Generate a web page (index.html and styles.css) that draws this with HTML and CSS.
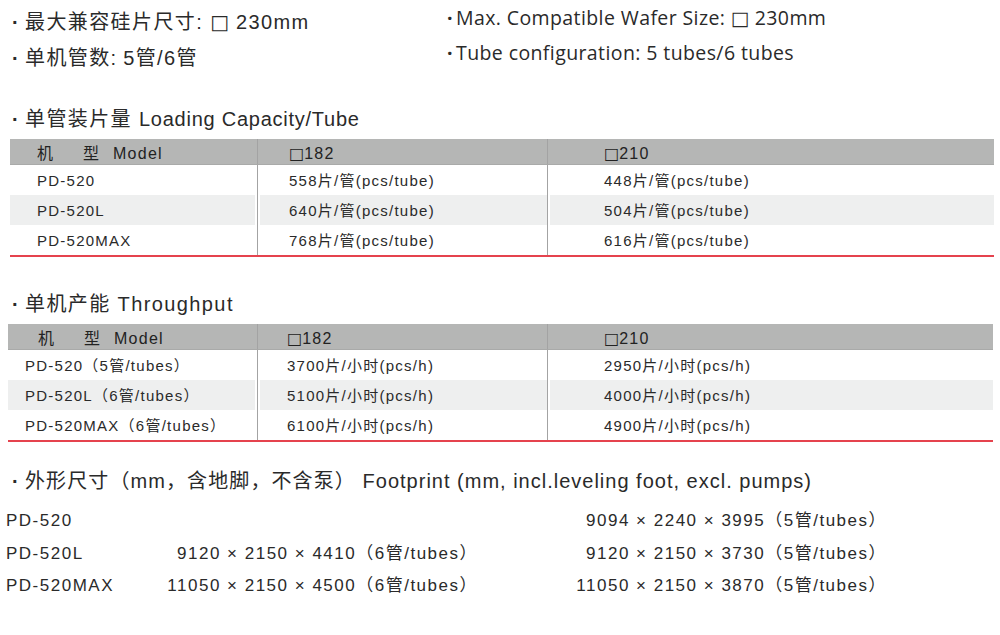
FILE: index.html
```html
<!DOCTYPE html>
<html lang="zh-CN">
<head>
<meta charset="utf-8">
<title>PD-520 规格</title>
<link rel="stylesheet" href="styles.css">
</head>
<body>
<div class="top">
  <ul class="spec spec-cn">
    <li><span class="dot">·</span>最大兼容硅片尺寸: <span class="sq">□</span> 230mm</li>
    <li><span class="dot">·</span>单机管数:<span class="tight"> </span>5管/6管</li>
  </ul>
  <ul class="spec spec-en">
    <li><span class="dot">·</span>Max. Compatible Wafer Size: <span class="sq">□</span> 230mm</li>
    <li><span class="dot">·</span>Tube configuration: 5 tubes/6 tubes</li>
  </ul>
</div>

<h2 class="heading h-load"><span class="dot">·</span>单管装片量 <span class="en">Loading Capacity/Tube</span></h2>
<div class="table t-load">
  <div class="cell head c1"><span class="k1">机</span><span class="k2">型</span>Model</div>
  <div class="cell head c2"><span class="sq">□</span>182</div>
  <div class="cell head c3"><span class="sq">□</span>210</div>

  <div class="cell c1">PD-520</div>
  <div class="cell c2">558片/管(pcs/tube)</div>
  <div class="cell c3">448片/管(pcs/tube)</div>

  <div class="cell alt c1">PD-520L</div>
  <div class="cell alt c2">640片/管(pcs/tube)</div>
  <div class="cell alt c3">504片/管(pcs/tube)</div>

  <div class="cell c1">PD-520MAX</div>
  <div class="cell c2">768片/管(pcs/tube)</div>
  <div class="cell c3">616片/管(pcs/tube)</div>
</div>

<h2 class="heading h-through"><span class="dot">·</span>单机产能 Throughput</h2>
<div class="table t-through">
  <div class="cell head c1"><span class="k1">机</span><span class="k2">型</span>Model</div>
  <div class="cell head c2"><span class="sq">□</span>182</div>
  <div class="cell head c3"><span class="sq">□</span>210</div>

  <div class="cell c1">PD-520（5管/tubes）</div>
  <div class="cell c2">3700片/小时(pcs/h)</div>
  <div class="cell c3">2950片/小时(pcs/h)</div>

  <div class="cell alt c1">PD-520L（6管/tubes）</div>
  <div class="cell alt c2">5100片/小时(pcs/h)</div>
  <div class="cell alt c3">4000片/小时(pcs/h)</div>

  <div class="cell c1">PD-520MAX（6管/tubes）</div>
  <div class="cell c2">6100片/小时(pcs/h)</div>
  <div class="cell c3">4900片/小时(pcs/h)</div>
</div>

<h2 class="heading h-foot"><span class="dot">·</span>外形尺寸（mm，含地脚，不含泵） <span class="en">Footprint (mm, incl.leveling foot, excl. pumps)</span></h2>
<div class="foot">
  <div class="fm">PD-520</div>
  <div class="f6"></div>
  <div class="f5">9094 × 2240 × 3995（5管/tubes）</div>

  <div class="fm">PD-520L</div>
  <div class="f6">9120 × 2150 × 4410（6管/tubes）</div>
  <div class="f5">9120 × 2150 × 3730（5管/tubes）</div>

  <div class="fm">PD-520MAX</div>
  <div class="f6">11050 × 2150 × 4500（6管/tubes）</div>
  <div class="f5">11050 × 2150 × 3870（5管/tubes）</div>
</div>
</body>
</html>
```

FILE: styles.css
```css
* { box-sizing: border-box; }

html, body {
  margin: 0;
  padding: 0;
  background: #ffffff;
}

body {
  width: 1000px;
  height: 635px;
  overflow: hidden;
  color: #2a2a2a;
  font-family: "Liberation Sans", "Noto Sans CJK SC", sans-serif;
}

.dot {
  display: inline-block;
  width: 13px;
  font-weight: bold;
  letter-spacing: 0;
}

/* ---------- top specs ---------- */
.top {
  display: flex;
}

.spec {
  list-style: none;
  margin: 0;
  padding: 0;
}

.spec-cn {
  width: 447px;
  padding: 4px 0 0 12px;
  font-size: 20px;
  line-height: 36px;
  letter-spacing: 1.4px;
}

.tight { letter-spacing: 0; }

.spec-en {
  padding-top: 1px;
  font-size: 19.5px;
  line-height: 34px;
  letter-spacing: 0.4px;
  font-family: "Open Sans", "Noto Sans CJK SC", sans-serif;
}

.spec-en .dot { width: 9px; }

.sq {
  font-family: "DejaVu Sans", sans-serif;
  font-weight: normal;
  letter-spacing: 0;
}

/* ---------- section headings ---------- */
.heading {
  margin: 0;
  padding-left: 12px;
  font-weight: normal;
  font-size: 20px;
  line-height: 28px;
  height: 28px;
  letter-spacing: 1.4px;
  white-space: nowrap;
}

.h-load { margin-top: 29px; }
.h-load .en { letter-spacing: 0.75px; }
.h-through { margin-top: 33px; }
.h-foot { margin-top: 25px; letter-spacing: 1.1px; }

.h-foot .en { letter-spacing: 1px; }

/* ---------- tables ---------- */
.table {
  display: grid;
  grid-template-columns: 247px 290px 1fr;
  margin-top: 6px;
  font-size: 15px;
  letter-spacing: 1.25px;
  border-bottom: 2px solid #e5434e;
}

.t-load { margin-left: 10px; margin-right: 6px; }
.t-through { margin-left: 8px; margin-right: 7px; grid-template-columns: 249px 290px 1fr; }

.cell {
  height: 30px;
  line-height: 32px;
  white-space: nowrap;
}

.cell.head {
  height: 26px;
  line-height: 29px;
  font-size: 16px;
  background: #b5b6b5;
  border-bottom: 1px solid #a9aaa9;
  color: #222;
}

.cell.alt { background: #eeefef; }

.c2, .c3 { border-left: 1px solid #a3a3a3; }

.cell.alt.c1 { box-shadow: inset -2px 0 0 #fff; }
.cell.alt.c2, .cell.alt.c3 { box-shadow: inset 2px 0 0 #fff; }

.c1 { padding-left: 27px; }
.c2 { padding-left: 31px; }
.c3 { padding-left: 56px; }

.t-through .c1 { padding-left: 17px; }
.t-through .c1.head { padding-left: 30px; }
.t-through .c2 { padding-left: 29px; }

.k1 { display: inline-block; width: 46px; }
.k2 { display: inline-block; width: 30px; }

/* ---------- footprint ---------- */
.foot {
  display: grid;
  grid-template-columns: 140px 332px 409px;
  margin-top: 10px;
  padding-left: 6px;
  font-size: 17px;
  line-height: 32.5px;
  letter-spacing: 1.5px;
  white-space: nowrap;
}

.f6, .f5 { text-align: right; }
```
